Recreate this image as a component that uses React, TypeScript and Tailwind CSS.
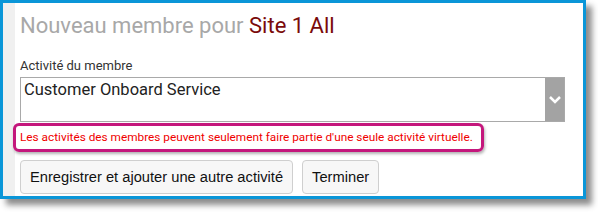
const App = () => {
    return (
        <div className="w-[598px] h-[213px] bg-white" style={{ fontFamily: 'Roboto, "Liberation Sans", sans-serif' }}>
            <div className="w-[586px] h-[199px] border-[3px] border-[#0a96d8] bg-white flex shadow-[6px_6px_6px_rgba(0,0,0,0.45)]">
                <div className="w-[12px] bg-[#f0f0f0]" />
                <div className="flex-1 pl-[5px] pr-[18px] pt-[8px]">
                    <h1 className="text-[22px] leading-[30px] text-[#a8a8a8]">
                        Nouveau membre pour <span className="text-[#7a0a0a]">Site 1 All</span>
                    </h1>
                    <label className="block mt-[15px] text-[13px] leading-[20px] text-[#333]">Activité du membre</label>
                    <div className="mt-[1px] h-[45px] border border-[#a9a9a9] flex">
                        <div className="flex-1 pl-[3px] pt-[2px] text-[16.5px] leading-[20px] text-[#222]">Customer Onboard Service</div>
                        <div className="w-[19px] bg-[#a3a3a3] flex items-center justify-center">
                            <svg width="14" height="10" viewBox="0 0 14 10">
                                <path d="M2 2 L7 7 L12 2" fill="none" stroke="white" strokeWidth="2.5" />
                            </svg>
                        </div>
                    </div>
                    <div className="-ml-[7px] mt-[1px] w-[471px] h-[29px] border-[3px] border-[#c4177c] rounded-[6px] shadow-[1px_2px_3px_rgba(0,0,0,0.3)] flex items-center pl-[4px]">
                        <span className="text-[11.8px] text-[#f00000]">Les activités des membres peuvent seulement faire partie d'une seule activité virtuelle.</span>
                    </div>
                    <div className="mt-[8px] flex gap-[9px]" style={{ fontFamily: '"Liberation Sans", Arial, sans-serif' }}>
                        <button className="h-[34px] px-[9px] bg-[#f7f7f7] border border-[#cfcfcf] rounded-[4px] text-[14.7px] text-[#111]">Enregistrer et ajouter une autre activité</button>
                        <button className="h-[34px] px-[9px] bg-[#f7f7f7] border border-[#cfcfcf] rounded-[4px] text-[14.7px] text-[#111]">Terminer</button>
                    </div>
                </div>
            </div>
        </div>
    );
};

export default App;
